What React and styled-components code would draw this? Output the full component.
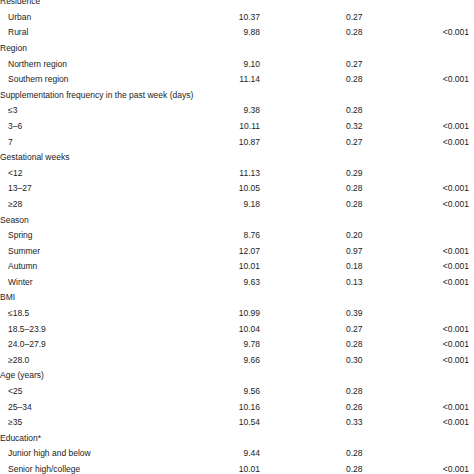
import React from "react";
import styled, { createGlobalStyle } from "styled-components";

const Global = createGlobalStyle`
  html, body { margin: 0; padding: 0; background: #fff; overflow: hidden; }
  body { font-family: "Liberation Sans", Arial, sans-serif; }
`;

const Table = styled.div`
  display: grid;
  grid-template-columns: 200px 60px 140px 69px;
  margin-top: -5.8px;
  color: #1c1c1c;
  font-size: 8.5px;
`;

const Cell = styled.div`
  height: 15.6px;
  line-height: 15.6px;
  white-space: nowrap;
`;

const Label = styled(Cell)`
  padding-left: ${(p) => (p.$sub ? "8px" : "0")};
  grid-column: ${(p) => (p.$sub ? "auto" : "1 / span 4")};
`;

const Mean = styled(Cell)`
  text-align: right;
`;

const SE = styled(Cell)`
  padding-left: 86px;
`;

const P = styled(Cell)`
  text-align: right;
`;

const data = [
  ["Residence"],
  ["Urban", "10.37", "0.27", ""],
  ["Rural", "9.88", "0.28", "<0.001"],
  ["Region"],
  ["Northern region", "9.10", "0.27", ""],
  ["Southern region", "11.14", "0.28", "<0.001"],
  ["Supplementation frequency in the past week (days)"],
  ["≤3", "9.38", "0.28", ""],
  ["3–6", "10.11", "0.32", "<0.001"],
  ["7", "10.87", "0.27", "<0.001"],
  ["Gestational weeks"],
  ["<12", "11.13", "0.29", ""],
  ["13–27", "10.05", "0.28", "<0.001"],
  ["≥28", "9.18", "0.28", "<0.001"],
  ["Season"],
  ["Spring", "8.76", "0.20", ""],
  ["Summer", "12.07", "0.97", "<0.001"],
  ["Autumn", "10.01", "0.18", "<0.001"],
  ["Winter", "9.63", "0.13", "<0.001"],
  ["BMI"],
  ["≤18.5", "10.99", "0.39", ""],
  ["18.5–23.9", "10.04", "0.27", "<0.001"],
  ["24.0–27.9", "9.78", "0.28", "<0.001"],
  ["≥28.0", "9.66", "0.30", "<0.001"],
  ["Age (years)"],
  ["<25", "9.56", "0.28", ""],
  ["25–34", "10.16", "0.26", "<0.001"],
  ["≥35", "10.54", "0.33", "<0.001"],
  ["Education*"],
  ["Junior high and below", "9.44", "0.28", ""],
  ["Senior high/college", "10.01", "0.28", "<0.001"],
];

export default function App() {
  return (
    <>
      <Global />
      <Table>
        {data.map((r, i) =>
          r.length === 1 ? (
            <Label key={i}>{r[0]}</Label>
          ) : (
            <React.Fragment key={i}>
              <Label $sub>{r[0]}</Label>
              <Mean>{r[1]}</Mean>
              <SE>{r[2]}</SE>
              <P>{r[3]}</P>
            </React.Fragment>
          )
        )}
      </Table>
    </>
  );
}
